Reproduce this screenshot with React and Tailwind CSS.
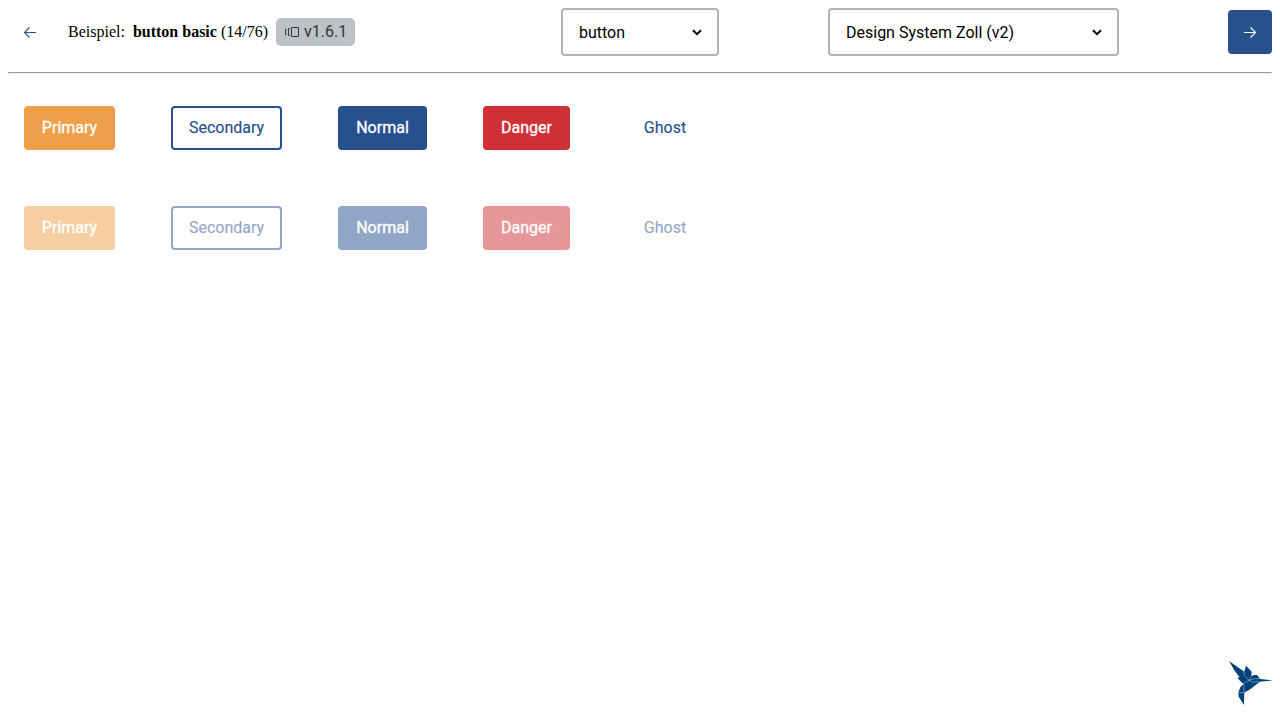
const base = 'box-border flex h-11 shrink-0 items-center justify-center rounded-[4px] border-2 pb-px text-base';

const buttons = [
  { label: 'Primary', style: 'w-[91px] border-[#ef9f49] bg-[#ef9f49] text-white [-webkit-text-stroke:0.3px_white]' },
  { label: 'Secondary', style: 'w-[111px] border-[#26508e] bg-white text-[#26508e] [-webkit-text-stroke:0.15px_#26508e]' },
  { label: 'Normal', style: 'w-[89px] border-[#26508e] bg-[#26508e] text-white [-webkit-text-stroke:0.3px_white]' },
  { label: 'Danger', style: 'w-[87px] border-[#cf3035] bg-[#cf3035] text-white [-webkit-text-stroke:0.3px_white]' },
  { label: 'Ghost', style: 'w-[78px] border-transparent text-[#26508e] [-webkit-text-stroke:0.15px_#26508e]' },
];

function ButtonRow({ disabled }) {
  return (
    <div className="flex gap-14">
      {buttons.map(({ label, style }) => (
        <button key={label} disabled={disabled} className={`${base} ${style} ${disabled ? 'opacity-50' : ''}`}>
          {label}
        </button>
      ))}
    </div>
  );
}

function Arrow({ left }) {
  return (
    <svg width="16" height="16" viewBox="0 0 16 16" fill="none" stroke="currentColor" strokeWidth="1.1">
      <path d={left ? 'M14 8.5H2.6M7.4 3.5L2.5 8.5L7.4 13.5' : 'M2 8.5H13.4M8.6 3.5L13.5 8.5L8.6 13.5'} />
    </svg>
  );
}

function Select({ label, width }) {
  return (
    <div className={`flex h-12 shrink-0 items-center justify-between rounded-[4px] border-2 border-[#b3b3b3] bg-white pr-[15px] pl-4 text-base text-black ${width}`}>
      <span className="pt-0.5">{label}</span>
      <svg width="10" height="8" viewBox="0 0 10 8" fill="none" stroke="black" strokeWidth="2">
        <path d="M1 2.2L5 6.2L9 2.2" />
      </svg>
    </div>
  );
}

function Bird() {
  return (
    <svg width="56" height="56" viewBox="0 0 168 168" className="absolute top-[655px] left-[1222px]">
      <path fill="#004178" d="M21 18L67 50L72 32L89 50L88 64L96 60L105 60L115 72L152 76L113 80L87 101L67 113L66 150L50 125L49 112L55 97L64 87L46 69L53 67L38 47Z" />
      <path d="M66 50L67 62L81 76L88 64M64 86L82 76L92 82L109 79M82 76L100 70L115 72M49 113H66L65 86" fill="none" stroke="#a9c3d5" strokeWidth="1.8" />
    </svg>
  );
}

export default function App() {
  return (
    <div className="relative h-[720px] w-full overflow-hidden bg-white p-2 font-[Roboto,sans-serif]">
      <header className="flex h-12 items-center">
        <div className="flex w-[553px] items-center">
          <button className="flex size-11 items-center justify-center text-[#26508e]"><Arrow left /></button>
          <p className="ml-4 font-['Liberation_Serif',serif] text-base leading-6 whitespace-pre text-black">
            Beispiel:  <b>button basic</b> (14/76)
          </p>
          <div className="ml-2 flex h-7 w-[79px] items-center rounded-[5px] bg-[#bbc3c7] pl-2 text-base text-[#333638]">
            <svg width="16" height="16" viewBox="0 0 16 16" fill="none" stroke="currentColor" className="mr-1">
              <path d="M7.5 3.5h7v9h-7z" />
              <path d="M6 4.5H4.5v7H6M2.8 5.5H1.5v5h1.3" />
            </svg>
            v1.6.1
          </div>
        </div>
        <Select label="button" width="w-[158px]" />
        <div className="ml-[109px]"><Select label="Design System Zoll (v2)" width="w-[291px]" /></div>
        <button className="ml-auto flex size-11 items-center justify-center rounded-[4px] bg-[#26508e] text-white"><Arrow /></button>
      </header>
      <hr className="mt-4 h-0.5 border border-t-[#9a9a9a] border-r-[#eeeeee] border-b-[#eeeeee] border-l-[#9a9a9a]" />
      <main className="flex flex-col gap-14 px-4 pt-8">
        <ButtonRow />
        <ButtonRow disabled />
      </main>
      <Bird />
    </div>
  );
}
